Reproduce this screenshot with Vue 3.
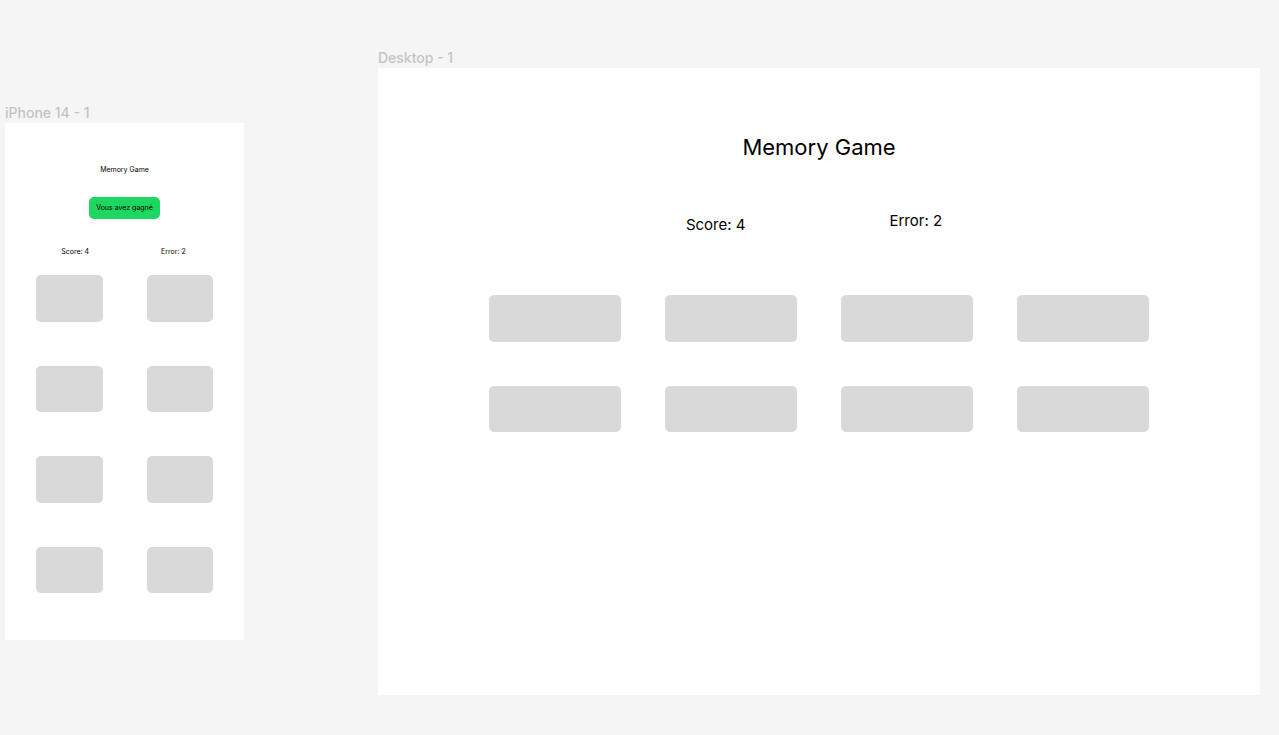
<script setup>
const score = 4
const errors = 2
</script>

<template>
  <main class="canvas">
    <section class="artboard" aria-labelledby="phone-label">
      <h2 id="phone-label" class="label">iPhone 14 - 1</h2>
      <div class="frame phone">
        <h1 class="title">Memory Game</h1>
        <p class="message">Vous avez gagné</p>
        <div class="stats">
          <span>Score: {{ score }}</span>
          <span>Error: {{ errors }}</span>
        </div>
        <div class="cards">
          <button v-for="n in 8" :key="n" type="button" class="card" :aria-label="`Carte ${n}`"></button>
        </div>
      </div>
    </section>

    <section class="artboard" aria-labelledby="desktop-label">
      <h2 id="desktop-label" class="label">Desktop - 1</h2>
      <div class="frame desktop">
        <h1 class="title">Memory Game</h1>
        <div class="stats">
          <span class="score">Score: {{ score }}</span>
          <span>Error: {{ errors }}</span>
        </div>
        <div class="cards">
          <button v-for="n in 8" :key="n" type="button" class="card" :aria-label="`Carte ${n}`"></button>
        </div>
      </div>
    </section>
  </main>
</template>

<style>
body {
  margin: 0;
  background: #f5f5f5;
}
</style>

<style scoped>
.canvas {
  box-sizing: border-box;
  min-height: 100vh;
  display: grid;
  grid-template-columns: 239fr 882fr;
  column-gap: 134px;
  align-items: center;
  padding: 48px 19px 40px 5px;
  font-family: Inter, "Liberation Sans", sans-serif;
  color: #000;
}

.label {
  margin: 0;
  font-size: 14px;
  line-height: 20px;
  font-weight: 500;
  color: #c4c4c4;
  white-space: nowrap;
}

.frame {
  box-sizing: border-box;
  display: flex;
  flex-direction: column;
  align-items: center;
  background: #fff;
}

.title,
.message {
  margin: 0;
  font-weight: 400;
}

.stats {
  display: flex;
  justify-content: center;
}

.cards {
  display: grid;
  grid-auto-rows: 1fr;
  gap: 44px;
  width: 100%;
}

.card {
  padding: 0;
  border: 0;
  border-radius: 5px;
  background: #d9d9d9;
  cursor: pointer;
}

.phone {
  padding: 42px 31px 47px;
  font-size: 7px;
  line-height: 10px;
}

.phone .title {
  font-size: 7px;
}

.phone .message {
  margin-top: 22px;
  padding: 6px 7px;
  border-radius: 5px;
  background: #1ed760;
}

.phone .stats {
  margin-top: 28px;
  padding-right: 2px;
  gap: 72px;
}

.phone .cards {
  grid-template-columns: repeat(2, 1fr);
  height: 318px;
  margin-top: 18px;
}

.desktop {
  padding: 64px 111px 263px;
}

.desktop .title {
  font-size: 22px;
  line-height: 30px;
}

.desktop .stats {
  height: 24px;
  margin-top: 49px;
  padding-right: 10px;
  gap: 144px;
  font-size: 15px;
  line-height: 20px;
}

.desktop .score {
  align-self: flex-end;
}

.desktop .cards {
  grid-template-columns: repeat(4, 1fr);
  height: 137px;
  margin-top: 60px;
}
</style>
